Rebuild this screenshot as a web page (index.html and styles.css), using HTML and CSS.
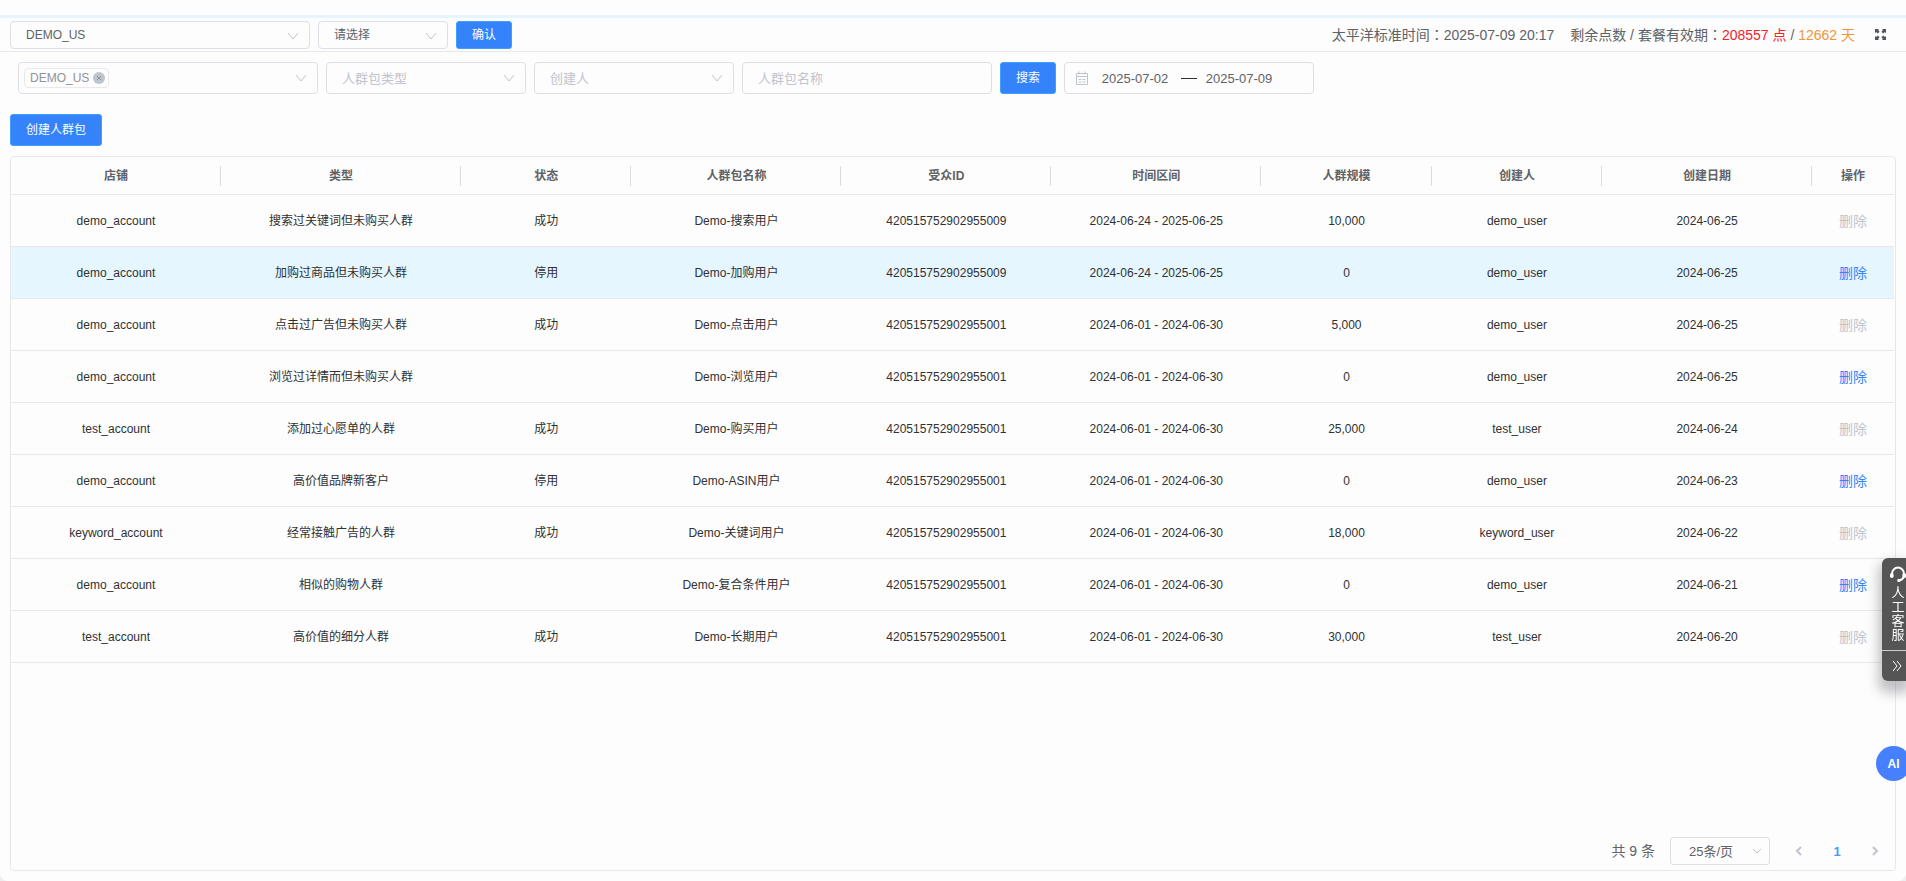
FILE: index.html
```html
<!DOCTYPE html>
<html lang="zh-CN">
<head>
  <meta charset="UTF-8">
  <meta name="viewport" content="width=device-width, initial-scale=1.0">
  <title>人群包管理</title>
  <link rel="stylesheet" href="styles.css">
</head>
<body>

  <!-- Top bar -->
  <header class="topbar">
    <div class="select-box store-select">
      <select aria-label="店铺"><option>DEMO_US</option></select>
      <svg class="arrow" viewBox="0 0 12 12"><path d="M1 4l5 6 5-6"/></svg>
    </div>
    <div class="select-box site-select">
      <select aria-label="站点"><option>请选择</option></select>
      <svg class="arrow" viewBox="0 0 12 12"><path d="M1 4l5 6 5-6"/></svg>
    </div>
    <button class="btn btn-small">确认</button>
    <div class="account-info">
      <span>太平洋标准时间<span class="colon" lang="zh-TW">：</span>2025-07-09 20:17</span>
      <span>剩余点数 / 套餐有效期<span class="colon" lang="zh-TW">：</span><span class="points">208557 点</span> / <span class="days">12662 天</span></span>
      <button class="fullscreen" aria-label="全屏">
        <svg viewBox="0 0 12 12"><path d="M0 0h4.500L3.300 1.200 5 3 3 5 1.200 3.300 0 4.500zM12 0v4.500l-1.200-1.200L9 5 7 3l1.700-1.800L7.500 0zM0 12V7.500l1.200 1.200L3 7l2 2-1.700 1.800L4.500 12zM12 12H7.500l1.200-1.200L7 9l2-2 1.800 1.700L12 7.500z"/></svg>
      </button>
    </div>
  </header>

  <main class="page">
    <!-- Filters -->
    <form class="filters">
      <div class="select-box multi-select">
        <span class="tag">DEMO_US
          <button type="button" class="tag-close" aria-label="移除"><svg viewBox="0 0 12 12"><path d="M4 4l4 4M8 4l-4 4"/></svg></button>
        </span>
        <svg class="arrow" viewBox="0 0 12 12"><path d="M1 3l5 6 5-6"/></svg>
      </div>
      <div class="select-box type-select">
        <select class="empty" aria-label="人群包类型"><option>人群包类型</option></select>
        <svg class="arrow" viewBox="0 0 12 12"><path d="M1 3l5 6 5-6"/></svg>
      </div>
      <div class="select-box type-select">
        <select class="empty" aria-label="创建人"><option>创建人</option></select>
        <svg class="arrow" viewBox="0 0 12 12"><path d="M1 3l5 6 5-6"/></svg>
      </div>
      <input class="name-input" type="text" placeholder="人群包名称" aria-label="人群包名称">
      <button type="button" class="btn">搜索</button>
      <div class="date-range">
        <svg class="calendar" viewBox="0 0 14 14"><path d="M1.500 2.500h11v11h-11zM1.500 5.500h11M4 .5v3M10 .5v3M3.500 8.500h3M7.500 8.500h3M3.500 11h3M7.500 11h3"/></svg>
        <input type="text" value="2025-07-02" aria-label="开始日期">
        <span class="date-sep"></span>
        <input type="text" value="2025-07-09" aria-label="结束日期">
      </div>
    </form>

    <div class="actions">
      <button class="btn btn-create">创建人群包</button>
    </div>

    <!-- Audience table -->
    <section class="card">
      <table>
        <colgroup>
          <col class="col-l"><col class="col-xl"><col class="col-m"><col class="col-l"><col class="col-l">
          <col class="col-l"><col class="col-m"><col class="col-m"><col class="col-l"><col class="col-s">
        </colgroup>
        <thead>
          <tr>
            <th>店铺</th><th>类型</th><th>状态</th><th>人群包名称</th><th>受众ID</th>
            <th>时间区间</th><th>人群规模</th><th>创建人</th><th>创建日期</th><th>操作</th>
          </tr>
        </thead>
        <tbody>
          <tr>
            <td>demo_account</td><td>搜索过关键词但未购买人群</td><td>成功</td><td>Demo-搜索用户</td><td>420515752902955009</td>
            <td>2024-06-24 - 2025-06-25</td><td>10,000</td><td>demo_user</td><td>2024-06-25</td><td><button class="link" disabled>删除</button></td>
          </tr>
          <tr class="current">
            <td>demo_account</td><td>加购过商品但未购买人群</td><td>停用</td><td>Demo-加购用户</td><td>420515752902955009</td>
            <td>2024-06-24 - 2025-06-25</td><td>0</td><td>demo_user</td><td>2024-06-25</td><td><button class="link">删除</button></td>
          </tr>
          <tr>
            <td>demo_account</td><td>点击过广告但未购买人群</td><td>成功</td><td>Demo-点击用户</td><td>420515752902955001</td>
            <td>2024-06-01 - 2024-06-30</td><td>5,000</td><td>demo_user</td><td>2024-06-25</td><td><button class="link" disabled>删除</button></td>
          </tr>
          <tr>
            <td>demo_account</td><td>浏览过详情而但未购买人群</td><td></td><td>Demo-浏览用户</td><td>420515752902955001</td>
            <td>2024-06-01 - 2024-06-30</td><td>0</td><td>demo_user</td><td>2024-06-25</td><td><button class="link">删除</button></td>
          </tr>
          <tr>
            <td>test_account</td><td>添加过心愿单的人群</td><td>成功</td><td>Demo-购买用户</td><td>420515752902955001</td>
            <td>2024-06-01 - 2024-06-30</td><td>25,000</td><td>test_user</td><td>2024-06-24</td><td><button class="link" disabled>删除</button></td>
          </tr>
          <tr>
            <td>demo_account</td><td>高价值品牌新客户</td><td>停用</td><td>Demo-ASIN用户</td><td>420515752902955001</td>
            <td>2024-06-01 - 2024-06-30</td><td>0</td><td>demo_user</td><td>2024-06-23</td><td><button class="link">删除</button></td>
          </tr>
          <tr>
            <td>keyword_account</td><td>经常接触广告的人群</td><td>成功</td><td>Demo-关键词用户</td><td>420515752902955001</td>
            <td>2024-06-01 - 2024-06-30</td><td>18,000</td><td>keyword_user</td><td>2024-06-22</td><td><button class="link" disabled>删除</button></td>
          </tr>
          <tr>
            <td>demo_account</td><td>相似的购物人群</td><td></td><td>Demo-复合条件用户</td><td>420515752902955001</td>
            <td>2024-06-01 - 2024-06-30</td><td>0</td><td>demo_user</td><td>2024-06-21</td><td><button class="link">删除</button></td>
          </tr>
          <tr>
            <td>test_account</td><td>高价值的细分人群</td><td>成功</td><td>Demo-长期用户</td><td>420515752902955001</td>
            <td>2024-06-01 - 2024-06-30</td><td>30,000</td><td>test_user</td><td>2024-06-20</td><td><button class="link" disabled>删除</button></td>
          </tr>
        </tbody>
      </table>

      <!-- Pagination -->
      <nav class="pagination" aria-label="分页">
        <span class="total">共 9 条</span>
        <div class="select-box size-select">
          <select aria-label="每页条数"><option>25条/页</option></select>
          <svg class="arrow" viewBox="0 0 12 12"><path d="M2 4l4 4 4-4"/></svg>
        </div>
        <button class="pager" aria-label="上一页"><svg viewBox="0 0 12 12"><path d="M8 2L4 6l4 4"/></svg></button>
        <button class="pager active">1</button>
        <button class="pager" aria-label="下一页"><svg viewBox="0 0 12 12"><path d="M4 2l4 4-4 4"/></svg></button>
      </nav>
    </section>
  </main>

  <!-- Floating service panel -->
  <aside class="service">
    <button class="service-main">
      <svg viewBox="0 0 16 16"><path class="band" d="M2 8a6 6.500 0 0 1 12 0M13.800 10.500c-.6 2.200-2 3.500-4.300 4"/><rect x="0" y="7" width="3.600" height="5" rx="1.800"/><rect x="12.400" y="7" width="3.600" height="5" rx="1.800"/><circle cx="8.800" cy="14.400" r="1.600"/></svg>
      <span>人工客服</span>
    </button>
    <button class="service-fold" aria-label="收起"><svg viewBox="0 0 12 12"><path d="M2 1l4 5-4 5M6 1l4 5-4 5"/></svg></button>
  </aside>
  <button class="ai-ball">AI</button>

</body>
</html>
```

FILE: styles.css
```css
* {
  margin: 0;
  padding: 0;
  box-sizing: border-box;
}

html {
  background-color: #eee;
}

body {
  display: flex;
  flex-direction: column;
  min-height: 100vh;
  padding-top: 15px;
  border-radius: 0 0 8px 8px;
  background-color: #fdfdfd;
  color: #606266;
  font-family: "Liberation Sans", "Noto Sans CJK SC", sans-serif;
  font-size: 14px;
}

button, input, select {
  font-family: inherit;
  border: none;
  background: none;
  outline: none;
  color: inherit;
}

button {
  cursor: pointer;
}

svg {
  display: block;
  fill: none;
}

/* Top bar */
.topbar {
  display: flex;
  align-items: center;
  gap: 8px;
  height: 37px;
  padding: 0 20px 0 10px;
  border-top: 3px solid #e6f4fd;
  border-bottom: 1px solid #e8e8e8;
}

.account-info {
  display: flex;
  align-items: center;
  gap: 16px;
  margin-left: auto;
  line-height: 16px;
  white-space: nowrap;
}

.colon {
  font-family: "Noto Sans CJK TC", sans-serif;
}

.points {
  color: #f5222d;
}

.days {
  color: #f0953a;
}

.fullscreen {
  margin-left: 4px;
}

.fullscreen svg {
  width: 11px;
  height: 11px;
  fill: #50555c;
}

/* Selects */
.select-box {
  display: flex;
  align-items: center;
  height: 32px;
  padding-right: 10px;
  border: 1px solid #dcdfe6;
  border-radius: 4px;
}

.select-box select {
  flex: 1;
  min-width: 0;
  height: 100%;
  padding-left: 15px;
  font-size: 13px;
  appearance: none;
}

.select-box select.empty {
  color: #c0c4cc;
}

.arrow {
  width: 12px;
  height: 12px;
  stroke: #c0c4cc;
}

.store-select,
.site-select {
  height: 28px;
}

.store-select,
.multi-select {
  width: 300px;
}

.site-select {
  width: 130px;
}

.store-select select,
.site-select select {
  font-size: 12px;
}

.type-select {
  width: 200px;
}

/* Buttons */
.btn {
  width: 56px;
  height: 32px;
  border: 1px solid #409eff;
  border-radius: 3px;
  background-color: #3583fb;
  color: #fff;
  font-size: 12px;
  line-height: 16px;
}

.btn-small {
  height: 28px;
}

.btn-create {
  width: 92px;
}

/* Page */
.page {
  flex: 1;
  display: flex;
  flex-direction: column;
  padding: 10px;
}

.filters {
  display: flex;
  gap: 8px;
  padding-left: 8px;
}

.multi-select {
  justify-content: space-between;
  padding-left: 5px;
}

.tag {
  display: flex;
  align-items: center;
  gap: 4px;
  height: 20px;
  padding: 0 3px 0 5px;
  border: 1px solid #e9e9eb;
  border-radius: 4px;
  color: #909399;
  font-size: 12px;
}

.tag-close svg {
  width: 12px;
  height: 12px;
  border-radius: 50%;
  background-color: #c0c4cc;
  stroke: #909399;
}

.name-input {
  width: 250px;
  height: 32px;
  padding: 0 15px;
  border: 1px solid #dcdfe6;
  border-radius: 4px;
  font-size: 13px;
}

.name-input::placeholder {
  color: #c0c4cc;
}

.date-range {
  display: flex;
  align-items: center;
  width: 250px;
  height: 32px;
  padding: 0 10px;
  border: 1px solid #dcdfe6;
  border-radius: 4px;
}

.date-range input {
  width: 80px;
  font-size: 13px;
  text-align: center;
}

.date-sep {
  width: 16px;
  height: 1px;
  margin: 0 2px 0 6px;
  background-color: #303133;
}

.calendar {
  width: 14px;
  height: 14px;
  margin-right: 6px;
  stroke: #c0c4cc;
}

.actions {
  padding: 20px 0 10px;
}

/* Table */
.card {
  flex: 1;
  display: flex;
  flex-direction: column;
  padding-right: 1px;
  border: 1px solid #e8e8e8;
  border-radius: 4px;
}

table {
  width: 100%;
  table-layout: fixed;
  border-collapse: separate;
  border-spacing: 0;
  font-size: 12px;
  line-height: 14px;
  text-align: center;
}

/* last column takes what is left */
.col-m {
  width: 9.05%;
}

.col-l {
  width: 11.15%;
}

.col-xl {
  width: 12.75%;
}

th {
  height: 38px;
  border-bottom: 1px solid #e8e8e8;
  background: linear-gradient(#dcdcdc, #dcdcdc) right center / 1px 20px no-repeat;
}

th:last-child {
  background: none;
}

td {
  height: 52px;
  border-bottom: 1px solid #e8e8e8;
  color: #303133;
}

.current td {
  background-color: #e5f6ff;
}

.link {
  display: block;
  margin: 0 auto;
  color: #3583fb;
  font-size: 14px;
  line-height: 16px;
}

.link:disabled {
  color: #c0c4cc;
  cursor: not-allowed;
}

/* Pagination */
.pagination {
  display: flex;
  align-items: center;
  justify-content: flex-end;
  margin-top: auto;
  padding: 5px 0;
  line-height: 16px;
}

.size-select {
  width: 100px;
  height: 28px;
  margin: 0 10px 0 15px;
  padding-right: 6px;
  border-radius: 3px;
}

.size-select select {
  padding-left: 18px;
}

.pager {
  display: flex;
  align-items: center;
  justify-content: center;
  width: 38px;
  height: 28px;
  font-size: 13px;
  font-weight: bold;
}

.pager svg {
  width: 12px;
  height: 12px;
  stroke: #c0c4cc;
  stroke-width: 2;
}

.pager.active {
  color: #409eff;
}

/* Floating widgets */
.service {
  position: fixed;
  top: 558px;
  right: 0;
  width: 24px;
  border-radius: 6px 0 0 6px;
  background-color: #555;
  box-shadow: 0 8px 12px 4px rgba(60, 60, 70, 0.3);
  color: #fff;
}

.service-main {
  display: flex;
  flex-direction: column;
  align-items: center;
  gap: 4px;
  width: 100%;
  height: 92px;
  padding: 8px 0 0 8px;
  font-size: 13px;
  line-height: 14px;
}

.service-main svg {
  width: 16px;
  height: 16px;
  flex-shrink: 0;
  fill: #fff;
}

.service-main .band {
  fill: none;
  stroke: #fff;
  stroke-width: 2;
}

.service-main span {
  width: 13px;
}

.service-fold {
  display: flex;
  align-items: center;
  justify-content: center;
  width: 100%;
  height: 31px;
  padding-left: 6px;
  border-top: 1px solid #ccc;
}

.service-fold svg {
  width: 12px;
  height: 12px;
  stroke: #fff;
}

.ai-ball {
  position: fixed;
  top: 746px;
  right: -5px;
  width: 35px;
  height: 35px;
  border-radius: 50%;
  background-color: #4680ff;
  color: #fff;
  font-size: 12px;
  font-weight: bold;
}
```
